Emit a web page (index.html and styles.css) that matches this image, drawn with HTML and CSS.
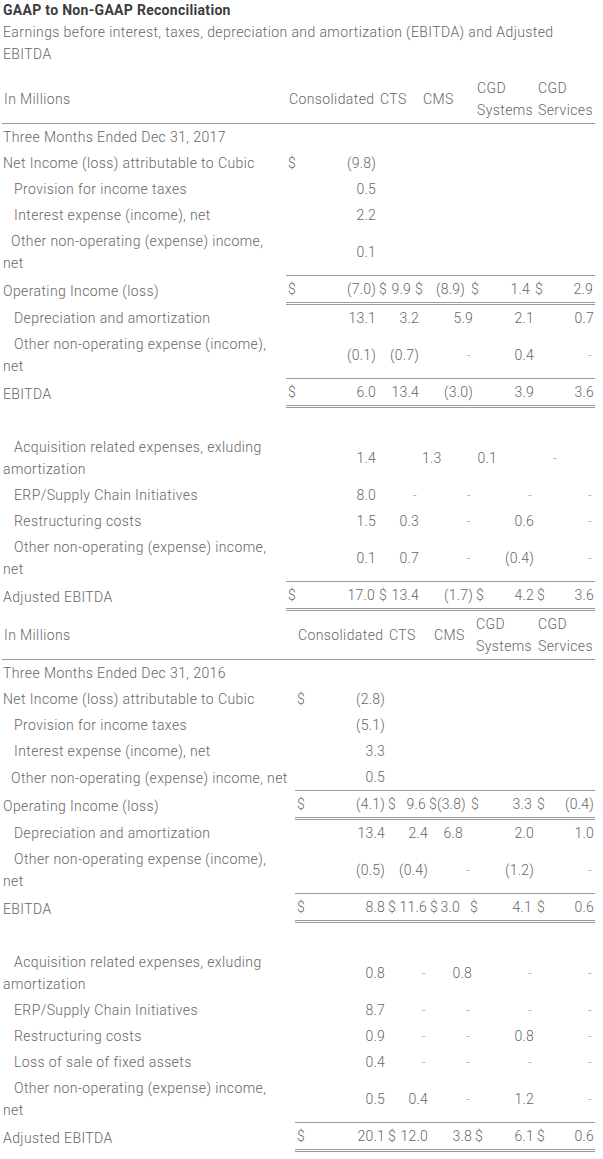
FILE: index.html
```html
<!DOCTYPE html>
<html lang="en">
<head>
<meta charset="utf-8">
<title>GAAP to Non-GAAP Reconciliation</title>
<link rel="stylesheet" href="styles.css">
</head>
<body>
<div class="page">
  <h1 class="title">GAAP to Non-GAAP Reconciliation</h1>
  <p class="subtitle">Earnings before interest, taxes, depreciation and amortization (EBITDA) and Adjusted EBITDA</p>

  <table class="recon recon-2017">
    <colgroup>
      <col class="c-label"><col class="c-cons"><col class="c-cts"><col class="c-cms"><col class="c-sys"><col class="c-serv">
    </colgroup>
    <thead>
      <tr>
        <th class="lbl">In Millions</th>
        <th>Consolidated</th>
        <th>CTS</th>
        <th>CMS</th>
        <th>CGD Systems</th>
        <th>CGD Services</th>
      </tr>
    </thead>
    <tbody>
      <tr><td class="lbl">Three Months Ended Dec 31, 2017</td><td></td><td></td><td></td><td></td><td></td></tr>
      <tr><td class="lbl">Net Income (loss) attributable to Cubic</td><td class="amt"><span class="cur">$</span>(9.8)</td><td></td><td></td><td></td><td></td></tr>
      <tr><td class="lbl indent">Provision for income taxes</td><td class="amt">0.5</td><td></td><td></td><td></td><td></td></tr>
      <tr><td class="lbl indent">Interest expense (income), net</td><td class="amt">2.2</td><td></td><td></td><td></td><td></td></tr>
      <tr class="sub-end"><td class="lbl indent-sm">Other non-operating (expense) income, net</td><td class="amt">0.1</td><td class="amt"></td><td class="amt"></td><td class="amt"></td><td class="amt"></td></tr>
      <tr class="total"><td class="lbl">Operating Income (loss)</td>
        <td class="amt"><span class="cur">$</span>(7.0)</td>
        <td class="amt"><span class="cur">$</span><span class="pr-8">9.9</span></td>
        <td class="amt"><span class="cur pull-7">$</span><span class="pr-8">(8.9)</span></td>
        <td class="amt"><span class="cur pull-5">$</span><span class="pr-4">1.4</span></td>
        <td class="amt"><span class="cur pull-2">$</span><span class="pr-1">2.9</span></td></tr>
      <tr><td class="lbl indent">Depreciation and amortization</td><td class="amt">13.1</td><td class="amt">3.2</td><td class="amt">5.9</td><td class="amt">2.1</td><td class="amt">0.7</td></tr>
      <tr class="sub-end"><td class="lbl indent">Other non-operating expense (income), net</td><td class="amt">(0.1)</td><td class="amt">(0.7)</td><td class="amt"><span class="dash">-</span></td><td class="amt">0.4</td><td class="amt"><span class="dash">-</span></td></tr>
      <tr class="total"><td class="lbl">EBITDA</td>
        <td class="amt"><span class="cur">$</span>6.0</td>
        <td class="amt">13.4</td>
        <td class="amt">(3.0)</td>
        <td class="amt">3.9</td>
        <td class="amt">3.6</td></tr>
      <tr class="spacer"><td class="lbl">&nbsp;</td><td></td><td></td><td></td><td></td><td></td></tr>
      <tr class="shifted"><td class="lbl indent">Acquisition related expenses, exluding amortization</td><td class="amt">1.4</td><td class="amt"></td><td class="amt"><span class="pr-33">1.3</span></td><td class="amt"><span class="pr-37">0.1</span></td><td class="amt"><span class="dash pr-37">-</span></td></tr>
      <tr><td class="lbl indent">ERP/Supply Chain Initiatives</td><td class="amt">8.0</td><td class="amt"><span class="dash">-</span></td><td class="amt"><span class="dash">-</span></td><td class="amt"><span class="dash">-</span></td><td class="amt"><span class="dash">-</span></td></tr>
      <tr><td class="lbl indent">Restructuring costs</td><td class="amt">1.5</td><td class="amt">0.3</td><td class="amt"><span class="dash">-</span></td><td class="amt">0.6</td><td class="amt"><span class="dash">-</span></td></tr>
      <tr class="sub-end"><td class="lbl indent">Other non-operating (expense) income, net</td><td class="amt">0.1</td><td class="amt">0.7</td><td class="amt"><span class="dash">-</span></td><td class="amt">(0.4)</td><td class="amt"><span class="dash">-</span></td></tr>
      <tr class="total"><td class="lbl">Adjusted EBITDA</td>
        <td class="amt"><span class="pr-1"><span class="cur">$</span>17.0</span></td>
        <td class="amt"><span class="cur">$</span>13.4</td>
        <td class="amt">(1.7)</td>
        <td class="amt"><span class="cur">$</span>4.2</td>
        <td class="amt"><span class="cur">$</span>3.6</td></tr>
    </tbody>
  </table>

  <table class="recon recon-2016">
    <colgroup>
      <col class="c-label"><col class="c-cons"><col class="c-cts"><col class="c-cms"><col class="c-sys"><col class="c-serv">
    </colgroup>
    <thead>
      <tr>
        <th class="lbl">In Millions</th>
        <th>Consolidated</th>
        <th>CTS</th>
        <th class="h-cms">CMS</th>
        <th>CGD Systems</th>
        <th>CGD Services</th>
      </tr>
    </thead>
    <tbody>
      <tr><td class="lbl">Three Months Ended Dec 31, 2016</td><td></td><td></td><td></td><td></td><td></td></tr>
      <tr><td class="lbl">Net Income (loss) attributable to Cubic</td><td class="amt"><span class="cur">$</span>(2.8)</td><td></td><td></td><td></td><td></td></tr>
      <tr><td class="lbl indent">Provision for income taxes</td><td class="amt">(5.1)</td><td></td><td></td><td></td><td></td></tr>
      <tr><td class="lbl indent">Interest expense (income), net</td><td class="amt">3.3</td><td></td><td></td><td></td><td></td></tr>
      <tr class="sub-end"><td class="lbl indent-sm nowrap">Other non-operating (expense) income, net</td><td class="amt">0.5</td><td class="amt"></td><td class="amt"></td><td class="amt"></td><td class="amt"></td></tr>
      <tr class="total"><td class="lbl">Operating Income (loss)</td>
        <td class="amt"><span class="cur">$</span>(4.1)</td>
        <td class="amt"><span class="cur">$</span><span class="pr-2">9.6</span></td>
        <td class="amt"><span class="cur pull-2">$</span><span class="pr-8">(3.8)</span></td>
        <td class="amt"><span class="cur pull-4">$</span><span class="pr-2">3.3</span></td>
        <td class="amt"><span class="cur">$</span>(0.4)</td></tr>
      <tr><td class="lbl indent">Depreciation and amortization</td><td class="amt">13.4</td><td class="amt">2.4</td><td class="amt"><span class="pr-9">6.8</span></td><td class="amt">2.0</td><td class="amt">1.0</td></tr>
      <tr class="sub-end"><td class="lbl indent">Other non-operating expense (income), net</td><td class="amt">(0.5)</td><td class="amt">(0.4)</td><td class="amt"><span class="dash">-</span></td><td class="amt">(1.2)</td><td class="amt"><span class="dash">-</span></td></tr>
      <tr class="total"><td class="lbl">EBITDA</td>
        <td class="amt"><span class="cur">$</span>8.8</td>
        <td class="amt"><span class="cur">$</span><span class="pr-1">11.6</span></td>
        <td class="amt"><span class="cur pull-1">$</span><span class="pr-12">3.0</span></td>
        <td class="amt"><span class="cur pull-5">$</span><span class="pr-2">4.1</span></td>
        <td class="amt"><span class="cur">$</span>0.6</td></tr>
      <tr class="spacer"><td class="lbl">&nbsp;</td><td></td><td></td><td></td><td></td><td></td></tr>
      <tr><td class="lbl indent">Acquisition related expenses, exluding amortization</td><td class="amt">0.8</td><td class="amt"><span class="dash">-</span></td><td class="amt">0.8</td><td class="amt"><span class="dash">-</span></td><td class="amt"><span class="dash">-</span></td></tr>
      <tr><td class="lbl indent">ERP/Supply Chain Initiatives</td><td class="amt">8.7</td><td class="amt"><span class="dash">-</span></td><td class="amt"><span class="dash">-</span></td><td class="amt"><span class="dash">-</span></td><td class="amt"><span class="dash">-</span></td></tr>
      <tr><td class="lbl indent">Restructuring costs</td><td class="amt">0.9</td><td class="amt"><span class="dash">-</span></td><td class="amt"><span class="dash">-</span></td><td class="amt">0.8</td><td class="amt"><span class="dash">-</span></td></tr>
      <tr><td class="lbl indent">Loss of sale of fixed assets</td><td class="amt">0.4</td><td class="amt"><span class="dash">-</span></td><td class="amt"><span class="dash">-</span></td><td class="amt"><span class="dash">-</span></td><td class="amt"><span class="dash">-</span></td></tr>
      <tr class="sub-end"><td class="lbl indent">Other non-operating (expense) income, net</td><td class="amt">0.5</td><td class="amt">0.4</td><td class="amt"><span class="dash">-</span></td><td class="amt">1.2</td><td class="amt"><span class="dash">-</span></td></tr>
      <tr class="total"><td class="lbl">Adjusted EBITDA</td>
        <td class="amt"><span class="cur">$</span>20.1</td>
        <td class="amt"><span class="cur">$</span>12.0</td>
        <td class="amt">3.8</td>
        <td class="amt"><span class="cur">$</span>6.1</td>
        <td class="amt"><span class="cur">$</span>0.6</td></tr>
    </tbody>
  </table>
</div>
</body>
</html>
```

FILE: styles.css
```css
html, body {
  margin: 0;
  padding: 0;
  background: #ffffff;
}

.page {
  padding: 0 8px 0 2px;
  font-family: Roboto, "Liberation Sans", sans-serif;
  font-weight: 300;
  font-size: 14px;
  letter-spacing: 0.4px;
  color: #666666;
}

.title {
  margin: 0;
  padding-left: 1px;
  font-size: 14px;
  line-height: 21px;
  font-weight: 700;
  letter-spacing: 0.3px;
  color: #3c3c3c;
}

.subtitle {
  margin: 0 0 10px 0;
  padding-left: 1px;
  line-height: 22px;
}

.recon {
  width: 593px;
  table-layout: fixed;
  border-collapse: separate;
  border-spacing: 0;
}

.recon-2017 .c-label { width: 284px; }
.recon-2017 .c-cons  { width: 91px; }
.recon-2017 .c-cts   { width: 43px; }
.recon-2017 .c-cms   { width: 54px; }
.recon-2017 .c-sys   { width: 61px; }
.recon-2017 .c-serv  { width: 60px; }

.recon-2016 .c-label { width: 293px; }
.recon-2016 .c-cons  { width: 91px; }
.recon-2016 .c-cts   { width: 43px; }
.recon-2016 .c-cms   { width: 44px; }
.recon-2016 .c-sys   { width: 62px; }
.recon-2016 .c-serv  { width: 60px; }

.recon th,
.recon td {
  padding: 2px 1px 2px 2px;
  line-height: 22px;
  vertical-align: middle;
  font-weight: 300;
}

.recon th {
  text-align: left;
  padding-left: 3px;
  border-bottom: 1px solid #9a9a9a;
}

.recon th.lbl { padding-left: 2px; }
.recon th.h-cms { padding-left: 5px; }

.recon td.lbl {
  padding-left: 1px;
  padding-right: 8px;
  text-align: left;
}

.indent { text-indent: 11px; }
.indent-sm { text-indent: 8px; }
.nowrap { white-space: nowrap; }

.amt {
  text-align: right;
  white-space: nowrap;
  letter-spacing: 0.2px;
}

.cur { float: left; }

.dash {
  color: #a8a8a8;
  padding-right: 2px;
}

.sub-end td.amt { border-bottom: 1px solid #9a9a9a; }

.total td.amt { border-bottom: 3px double #9a9a9a; }

.spacer td { height: 21px; }

.pull-1 { margin-left: -1px; }
.pull-2 { margin-left: -2px; }
.pull-4 { margin-left: -4px; }
.pull-5 { margin-left: -5px; }
.pull-7 { margin-left: -7px; }

.pr-1 { padding-right: 1px; }
.pr-2 { padding-right: 2px; }
.pr-4 { padding-right: 4px; }
.pr-8 { padding-right: 8px; }
.pr-9 { padding-right: 9px; }
.pr-12 { padding-right: 12px; }
.pr-33 { padding-right: 33px; }
.pr-37 { padding-right: 37px; }
```
